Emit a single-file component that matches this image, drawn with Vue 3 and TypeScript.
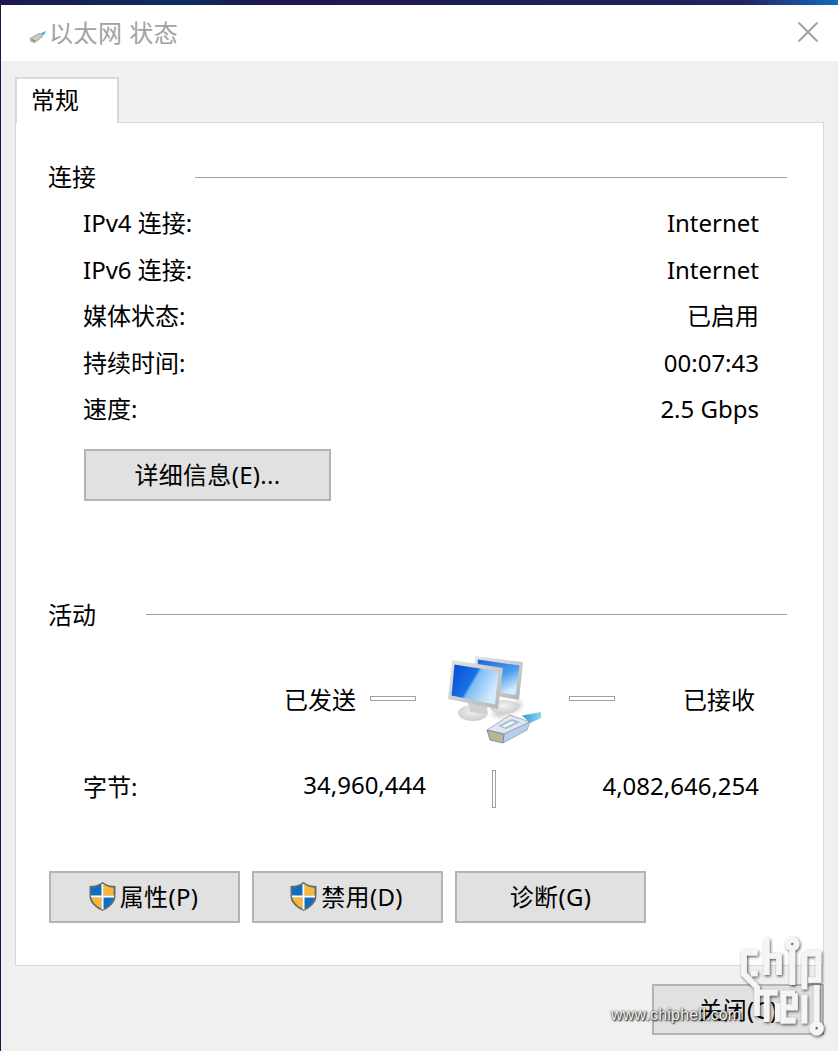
<script setup lang="ts">
interface InfoRow {
  label: string
  value: string
}

const rows: InfoRow[] = [
  { label: 'IPv4 连接:', value: 'Internet' },
  { label: 'IPv6 连接:', value: 'Internet' },
  { label: '媒体状态:', value: '已启用' },
  { label: '持续时间:', value: '00:07:43' },
  { label: '速度:', value: '2.5 Gbps' }
]
</script>

<template>
  <div class="window">
    <div class="desktop-strip"></div>

    <header class="titlebar">
      <svg class="title-icon" width="18" height="14" viewBox="0 0 18 14">
        <path d="M1 8.500 L10 3.500 L14 6 L6 12.500 L2 11.500 Z" fill="#c9ccc9" stroke="#8f9690" stroke-width="0.8" />
        <path d="M2.500 9.500 L6 11" stroke="#6f7a70" stroke-width="1.200" />
        <path d="M11 3.500 L17 1 L15 5 Z" fill="#3fa9d8" />
      </svg>
      <span class="title-text">以太网 状态</span>
      <svg class="close-x" width="20" height="20" viewBox="0 0 20 20">
        <path d="M0.500 0.500 L19.500 19.500 M19.500 0.500 L0.500 19.500" stroke="#a3a3a3" stroke-width="2" fill="none" />
      </svg>
    </header>

    <main class="body">
      <div class="tab">常规</div>
      <section class="panel">
        <div class="group-head">
          <span>连接</span>
          <div class="group-line connect-line"></div>
        </div>
        <div class="info-rows">
          <div v-for="row in rows" :key="row.label" class="info-row">
            <span>{{ row.label }}</span>
            <span>{{ row.value }}</span>
          </div>
        </div>
        <button class="btn details">详细信息(E)...</button>

        <div class="group-head activity-head">
          <span>活动</span>
          <div class="group-line activity-line"></div>
        </div>

        <div class="transfer">
          <span class="sent">已发送</span>
          <div class="slot-left"><i class="hbar"></i></div>
          <svg class="net-icon" width="100" height="100" viewBox="15 10 100 100">
            <defs>
              <linearGradient id="scr" x1="0" y1="0" x2="1" y2="0.5">
                <stop offset="0" stop-color="#0a4ccc" />
                <stop offset="0.5" stop-color="#1670e6" />
                <stop offset="0.56" stop-color="#7fbcf6" />
                <stop offset="1" stop-color="#d5ebfd" />
              </linearGradient>
              <linearGradient id="scrBack" x1="0" y1="0" x2="0.6" y2="1">
                <stop offset="0" stop-color="#1466dc" />
                <stop offset="0.6" stop-color="#4d9df0" />
                <stop offset="1" stop-color="#d5ebfd" />
              </linearGradient>
              <linearGradient id="frame" x1="0" y1="0" x2="1" y2="1">
                <stop offset="0" stop-color="#e4e6e6" />
                <stop offset="1" stop-color="#b4b6b6" />
              </linearGradient>
              <linearGradient id="tail" x1="0" y1="0" x2="1" y2="0">
                <stop offset="0" stop-color="#2f9fd4" />
                <stop offset="1" stop-color="#8fd6ee" />
              </linearGradient>
              <radialGradient id="foot" cx="0.5" cy="0.4" r="0.6">
                <stop offset="0" stop-color="#f2f2f2" />
                <stop offset="1" stop-color="#cdcdcd" />
              </radialGradient>
              <filter id="soft"><feGaussianBlur stdDeviation="0.5" /></filter>
              <filter id="softer"><feGaussianBlur stdDeviation="2" /></filter>
            </defs>
            <path d="M60 72 L90 58 L92 66 L70 76 Z" fill="#cfcfcf" filter="url(#softer)" />
            <g filter="url(#soft)">
              <ellipse cx="74" cy="65" rx="14" ry="7" fill="url(#foot)" />
              <path d="M45 14 L93 20 L89 58 L44 50 Z" fill="url(#frame)" />
              <path d="M48 17.500 L89.500 23.500 L85.500 53 L46 46 Z" fill="url(#scrBack)" />
              <ellipse cx="43" cy="71" rx="15" ry="8" fill="url(#foot)" />
              <path d="M38 60 L58 63 L56 72 L40 70 Z" fill="#d0d0d0" />
              <path d="M22 18 L73 26 L68 67 L18 57 Z" fill="url(#frame)" />
              <path d="M24.500 22.500 L68.500 29.500 L65 62.500 L21.500 53.500 Z" fill="url(#scr)" />
              <path d="M92 73.500 L111 70 L111 76 L100 81 Z" fill="url(#tail)" />
              <path d="M57 88 L80 73 L100 80 L74 92 Z" fill="#dfe7ef" stroke="#8e9fb4" stroke-width="0.800" />
              <path d="M74 92 L100 80 L97 88 L73 101 Z" fill="#b9cee6" stroke="#8e9fb4" stroke-width="0.800" />
              <path d="M57 88 L74 92 L73 101 L60 98 Z" fill="#a8b4bf" stroke="#75838f" stroke-width="0.800" />
              <path d="M60 91 L71 93.500 L70.500 97 L61 95 Z" fill="#c9bb58" />
              <path d="M68 84 L82 77 L90 80 L76 87 Z" fill="#a9bccf" />
              <path d="M72 84 L82 79 L85 80.500 L75 85.500 Z" fill="#f4f7fa" />
            </g>
          </svg>
          <div class="slot-right"><i class="hbar"></i></div>
          <span class="received">已接收</span>
        </div>

        <div class="bytes">
          <div class="bytes-left">
            <span>字节:</span>
            <span>34,960,444</span>
          </div>
          <i class="vbar"></i>
          <span class="bytes-right">4,082,646,254</span>
        </div>

        <div class="actions">
          <button class="btn action">
            <svg class="shield" width="29" height="31" viewBox="0 0 29 31">
              <path d="M14.500 1 C10 4 6 5 1.500 5 V15 C1.500 22 8 27 14.500 30 C21 27 27.500 22 27.500 15 V5 C23 5 19 4 14.500 1 Z" fill="#6b6b6b" />
              <path d="M13.500 3.500 C10 5.500 7 6.500 3.500 6.800 V14.500 H13.500 Z" fill="#0a6fc8" />
              <path d="M15.500 3.500 C19 5.500 22 6.500 25.500 6.800 V14.500 H15.500 Z" fill="#f9b934" />
              <path d="M3.500 16.500 H13.500 V27.500 C8.500 25 4.500 21.500 3.500 16.500 Z" fill="#f9b934" />
              <path d="M25.500 16.500 H15.500 V27.500 C20.500 25 24.500 21.500 25.500 16.500 Z" fill="#0a6fc8" />
              <path d="M14.500 3 V28.500 M3 15.500 H26" stroke="#fff" stroke-width="2" fill="none" />
            </svg>
            <span>属性(P)</span>
          </button>
          <button class="btn action">
            <svg class="shield" width="29" height="31" viewBox="0 0 29 31">
              <path d="M14.500 1 C10 4 6 5 1.500 5 V15 C1.500 22 8 27 14.500 30 C21 27 27.500 22 27.500 15 V5 C23 5 19 4 14.500 1 Z" fill="#6b6b6b" />
              <path d="M13.500 3.500 C10 5.500 7 6.500 3.500 6.800 V14.500 H13.500 Z" fill="#0a6fc8" />
              <path d="M15.500 3.500 C19 5.500 22 6.500 25.500 6.800 V14.500 H15.500 Z" fill="#f9b934" />
              <path d="M3.500 16.500 H13.500 V27.500 C8.500 25 4.500 21.500 3.500 16.500 Z" fill="#f9b934" />
              <path d="M25.500 16.500 H15.500 V27.500 C20.500 25 24.500 21.500 25.500 16.500 Z" fill="#0a6fc8" />
              <path d="M14.500 3 V28.500 M3 15.500 H26" stroke="#fff" stroke-width="2" fill="none" />
            </svg>
            <span>禁用(D)</span>
          </button>
          <button class="btn action">诊断(G)</button>
        </div>
      </section>

      <footer class="footer">
        <button class="btn close-btn">关闭(C)</button>
      </footer>
    </main>

    <!-- chiphell 水印 -->
    <div class="watermark">
      <svg class="wm-logo" width="100" height="110" viewBox="0 0 300 330">
        <defs>
          <filter id="wmShadow" x="-20%" y="-20%" width="140%" height="140%">
            <feDropShadow dx="3" dy="4" stdDeviation="5" flood-color="#000" flood-opacity="0.7" />
          </filter>
        </defs>
        <g filter="url(#wmShadow)" fill="none" stroke="#f5f5f5" stroke-width="17">
          <path d="M68 68 H27 V132 L66 172 V258" />
          <path d="M68 130 H48" />
          <path d="M95 25 V135 M95 78 H132 V135" />
          <path d="M172 60 V165" />
          <path d="M208 70 H250 V150 H220 M208 70 V178" />
          <path d="M66 188 H128 M95 188 V275 M128 220 V275" />
          <path d="M180 190 H145 V272 H182 M145 232 H180 V190" />
          <path d="M208 195 V280" />
          <path d="M245 165 V278" />
          <circle cx="172" cy="42" r="13" />
          <circle cx="245" cy="295" r="13" />
        </g>
      </svg>
      <span class="wm-url">www.chiphell.com</span>
    </div>
  </div>
</template>

<style scoped>
.window {
  position: relative;
  box-sizing: border-box;
  width: 838px;
  height: 1051px;
  display: flex;
  flex-direction: column;
  overflow: hidden;
  border-left: 1px solid #1d1748;
  font-family: "Noto Sans", "Noto Sans CJK SC", sans-serif;
  font-size: 24px;
  color: #000;
  background: #f0f0f0;
}

.desktop-strip {
  height: 5px;
  background: linear-gradient(90deg, #1c1850 0, #0d2f5e 22%, #1c1850 30%, #22225c 88%, #1668c0 100%);
}

.titlebar {
  height: 56px;
  background: #fff;
  display: flex;
  align-items: center;
  padding: 0 20px 0 28px;
}

.title-icon {
  margin: 8px 2px 0 0;
}

.title-text {
  color: #a2a2a2;
  line-height: 1;
  letter-spacing: 0.5px;
}

.close-x {
  margin-left: auto;
  margin-top: -2px;
}

.body {
  flex: 1;
  display: flex;
  flex-direction: column;
  align-items: flex-start;
  padding: 16px 14px 0;
}

.tab {
  position: relative;
  z-index: 1;
  box-sizing: border-box;
  width: 104px;
  height: 46px;
  margin-bottom: -1px;
  padding: 0 0 0 14px;
  line-height: 42px;
  background: #fff;
  border: 2px solid #d9d9d9;
  border-bottom: 0;
}

.panel {
  box-sizing: border-box;
  width: 809px;
  height: 844px;
  padding: 40px 36px 0 32px;
  background: #fff;
  border: 1px solid #d9d9d9;
}

.group-head {
  display: flex;
  align-items: center;
  height: 28px;
  line-height: 28px;
}

.group-line {
  height: 1px;
  background: #a0a0a0;
}

.connect-line {
  margin-left: 99px;
  width: 592px;
}

.activity-head {
  margin-top: 100px;
}

.activity-line {
  margin-left: 50px;
  width: 641px;
}

.info-rows {
  padding: 9px 28px 0 35px;
}

.info-row {
  display: flex;
  justify-content: space-between;
  height: 46.5px;
  line-height: 46.5px;
}

.btn {
  box-sizing: border-box;
  font: inherit;
  letter-spacing: 0.3px;
  color: #000;
  background: #e1e1e1;
  border: 2px solid #b4b4b4;
  padding: 0;
  display: flex;
  align-items: center;
  justify-content: center;
  line-height: 1;
}

.details {
  width: 247px;
  height: 52px;
  margin: 16px 0 0 36px;
}

.transfer {
  display: flex;
  align-items: center;
  margin: 23px 0 0 35px;
  height: 100px;
}

.sent {
  width: 273px;
  text-align: right;
  margin-top: -6px;
}

.slot-left,
.slot-right {
  display: flex;
  margin-top: -6px;
}

.slot-left {
  width: 89px;
  padding-left: 14px;
  box-sizing: border-box;
}

.slot-right {
  width: 46px;
  margin-left: 24px;
}

.hbar {
  display: block;
  box-sizing: border-box;
  width: 46px;
  height: 5px;
  background: #fff;
  border: 1px solid #a0a0a0;
}

.received {
  margin: -6px 0 0 68px;
}

.bytes {
  display: flex;
  align-items: center;
  margin: 15px 28px 0 35px;
  height: 38px;
}

.bytes-left {
  width: 343px;
  display: flex;
  justify-content: space-between;
}

.vbar {
  display: block;
  box-sizing: border-box;
  width: 4px;
  height: 38px;
  margin: 6px 0 0 66px;
  background: #fff;
  border: 1px solid #a0a0a0;
}

.bytes-right {
  margin-left: auto;
}

.actions {
  display: flex;
  gap: 12px;
  margin: 66px 0 0 1px;
}

.action {
  width: 191px;
  height: 52px;
  gap: 3px;
}

.shield {
  flex: none;
  margin-left: -3px;
}

.footer {
  align-self: stretch;
  display: flex;
  margin-top: 18px;
  padding-left: 637px;
}

.close-btn {
  width: 173px;
  height: 51px;
}

.watermark {
  position: absolute;
  right: 0;
  bottom: 0;
  width: 240px;
  height: 131px;
  pointer-events: none;
}

.wm-logo {
  position: absolute;
  left: 137px;
  top: 10px;
}

.wm-url {
  position: absolute;
  left: 13px;
  top: 86px;
  font-family: "Liberation Sans", sans-serif;
  font-size: 16px;
  letter-spacing: 0.2px;
  color: #f2f2f2;
  text-shadow: 1px 1px 2px #000, 0 0 2px #333;
  white-space: nowrap;
}
</style>
